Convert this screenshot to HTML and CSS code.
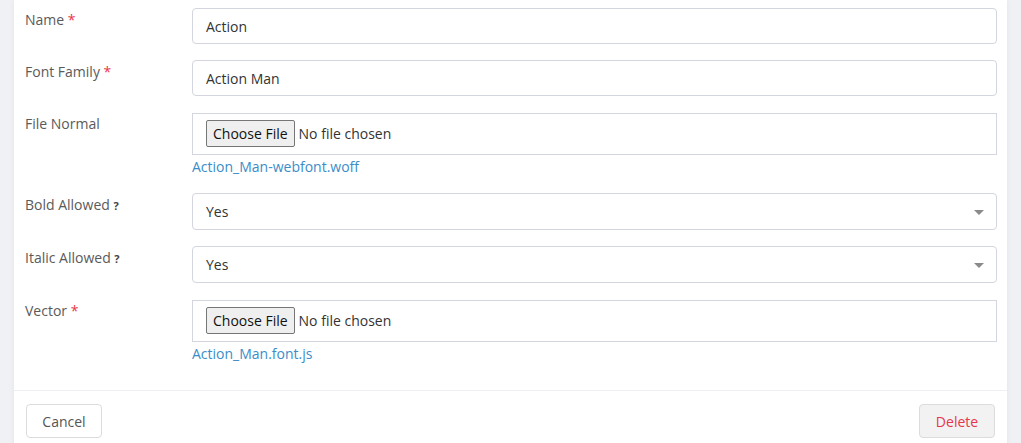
FILE: index.html
```html
<!DOCTYPE html>
<html>
<head>
    <title>Edit Font</title>
    <link rel="stylesheet" href="styles.css">
</head>

<body>
    <div class="panel">
        <form class="font-form" id="fontForm">
            <div class="form-group">
                <label for="name">Name <span class="req">*</span></label>
                <div class="field">
                    <input type="text" id="name" name="name" value="Action">
                </div>
            </div>

            <div class="form-group">
                <label for="fontFamily">Font Family <span class="req">*</span></label>
                <div class="field">
                    <input type="text" id="fontFamily" name="fontFamily" value="Action Man">
                </div>
            </div>

            <div class="form-group">
                <label for="fileNormal">File Normal</label>
                <div class="field">
                    <div class="file-box">
                        <input type="file" id="fileNormal" name="fileNormal">
                    </div>
                    <a class="file-link" href="#">Action_Man-webfont.woff</a>
                </div>
            </div>

            <div class="form-group">
                <label for="boldAllowed">Bold Allowed <span class="hint">?</span></label>
                <div class="field select-wrap">
                    <select id="boldAllowed" name="boldAllowed">
                        <option>Yes</option>
                        <option>No</option>
                    </select>
                </div>
            </div>

            <div class="form-group">
                <label for="italicAllowed">Italic Allowed <span class="hint">?</span></label>
                <div class="field select-wrap">
                    <select id="italicAllowed" name="italicAllowed">
                        <option>Yes</option>
                        <option>No</option>
                    </select>
                </div>
            </div>

            <div class="form-group">
                <label for="vector">Vector <span class="req">*</span></label>
                <div class="field">
                    <div class="file-box">
                        <input type="file" id="vector" name="vector">
                    </div>
                    <a class="file-link" href="#">Action_Man.font.js</a>
                </div>
            </div>
        </form>

        <div class="panel-footer">
            <button type="button" class="btn">Cancel</button>
            <button type="button" class="btn btn-delete">Delete</button>
        </div>
    </div>
</body>
</html>
```

FILE: styles.css
```css
body {
    margin: 0;
    background-color: #f0f1f5;
    font-family: "Open Sans", "Noto Sans", Arial, sans-serif;
    font-size: 14px;
    color: #555;
}

.panel {
    margin: 0 14px;
    background-color: #fff;
    box-shadow: 0 0 6px rgba(0, 0, 0, 0.06);
    min-height: 460px;
}

.font-form {
    padding: 8px 10px 10px 11px;
}

.form-group {
    display: grid;
    grid-template-columns: 167px 1fr;
    margin-bottom: 16px;
}

.form-group label {
    padding-top: 1px;
    line-height: 22px;
    color: #5a5a5a;
}

.req {
    color: #e8364a;
}

.hint {
    font-size: 11px;
    font-weight: bold;
    color: #444;
}

.field input[type="text"],
.field select {
    width: 100%;
    box-sizing: border-box;
    height: 36px;
    padding: 0 13px;
    border: 1px solid #d3d6de;
    border-radius: 4px;
    background-color: #fff;
    font-family: inherit;
    font-size: 14px;
    color: #333;
    outline: none;
}

.select-wrap {
    position: relative;
}

.field select {
    height: 37px;
    appearance: none;
    -webkit-appearance: none;
}

.select-wrap::after {
    content: "";
    position: absolute;
    right: 13px;
    top: 17px;
    border-left: 5px solid transparent;
    border-right: 5px solid transparent;
    border-top: 5px solid #8a8a8a;
}

.file-box {
    margin-top: 1px;
    border: 1px solid #d3d6de;
    padding: 6px 13px;
    height: 42px;
    box-sizing: border-box;
}

.file-box input[type="file"] {
    font-family: inherit;
    font-size: 14px;
    color: #333;
}

.file-box input[type="file"]::file-selector-button {
    font-family: inherit;
    font-size: 14px;
    color: #111;
    background-color: #efefef;
    border: 1px solid #767676;
    border-radius: 2px;
    height: 27px;
    padding: 0 6px;
    margin-right: 4px;
}

.file-link {
    display: block;
    margin-top: 2px;
    line-height: 20px;
    color: #3b8dc9;
    text-decoration: none;
}

.panel-footer {
    display: flex;
    justify-content: space-between;
    border-top: 1px solid #eeeff2;
    padding: 13px 12px;
}

.btn {
    width: 76px;
    height: 34px;
    border: 1px solid #dcdcdc;
    border-radius: 4px;
    background-color: #fff;
    font-family: inherit;
    font-size: 14px;
    color: #555;
    cursor: pointer;
}

.btn-delete {
    background-color: #f2f2f2;
    color: #e8364a;
}
```
